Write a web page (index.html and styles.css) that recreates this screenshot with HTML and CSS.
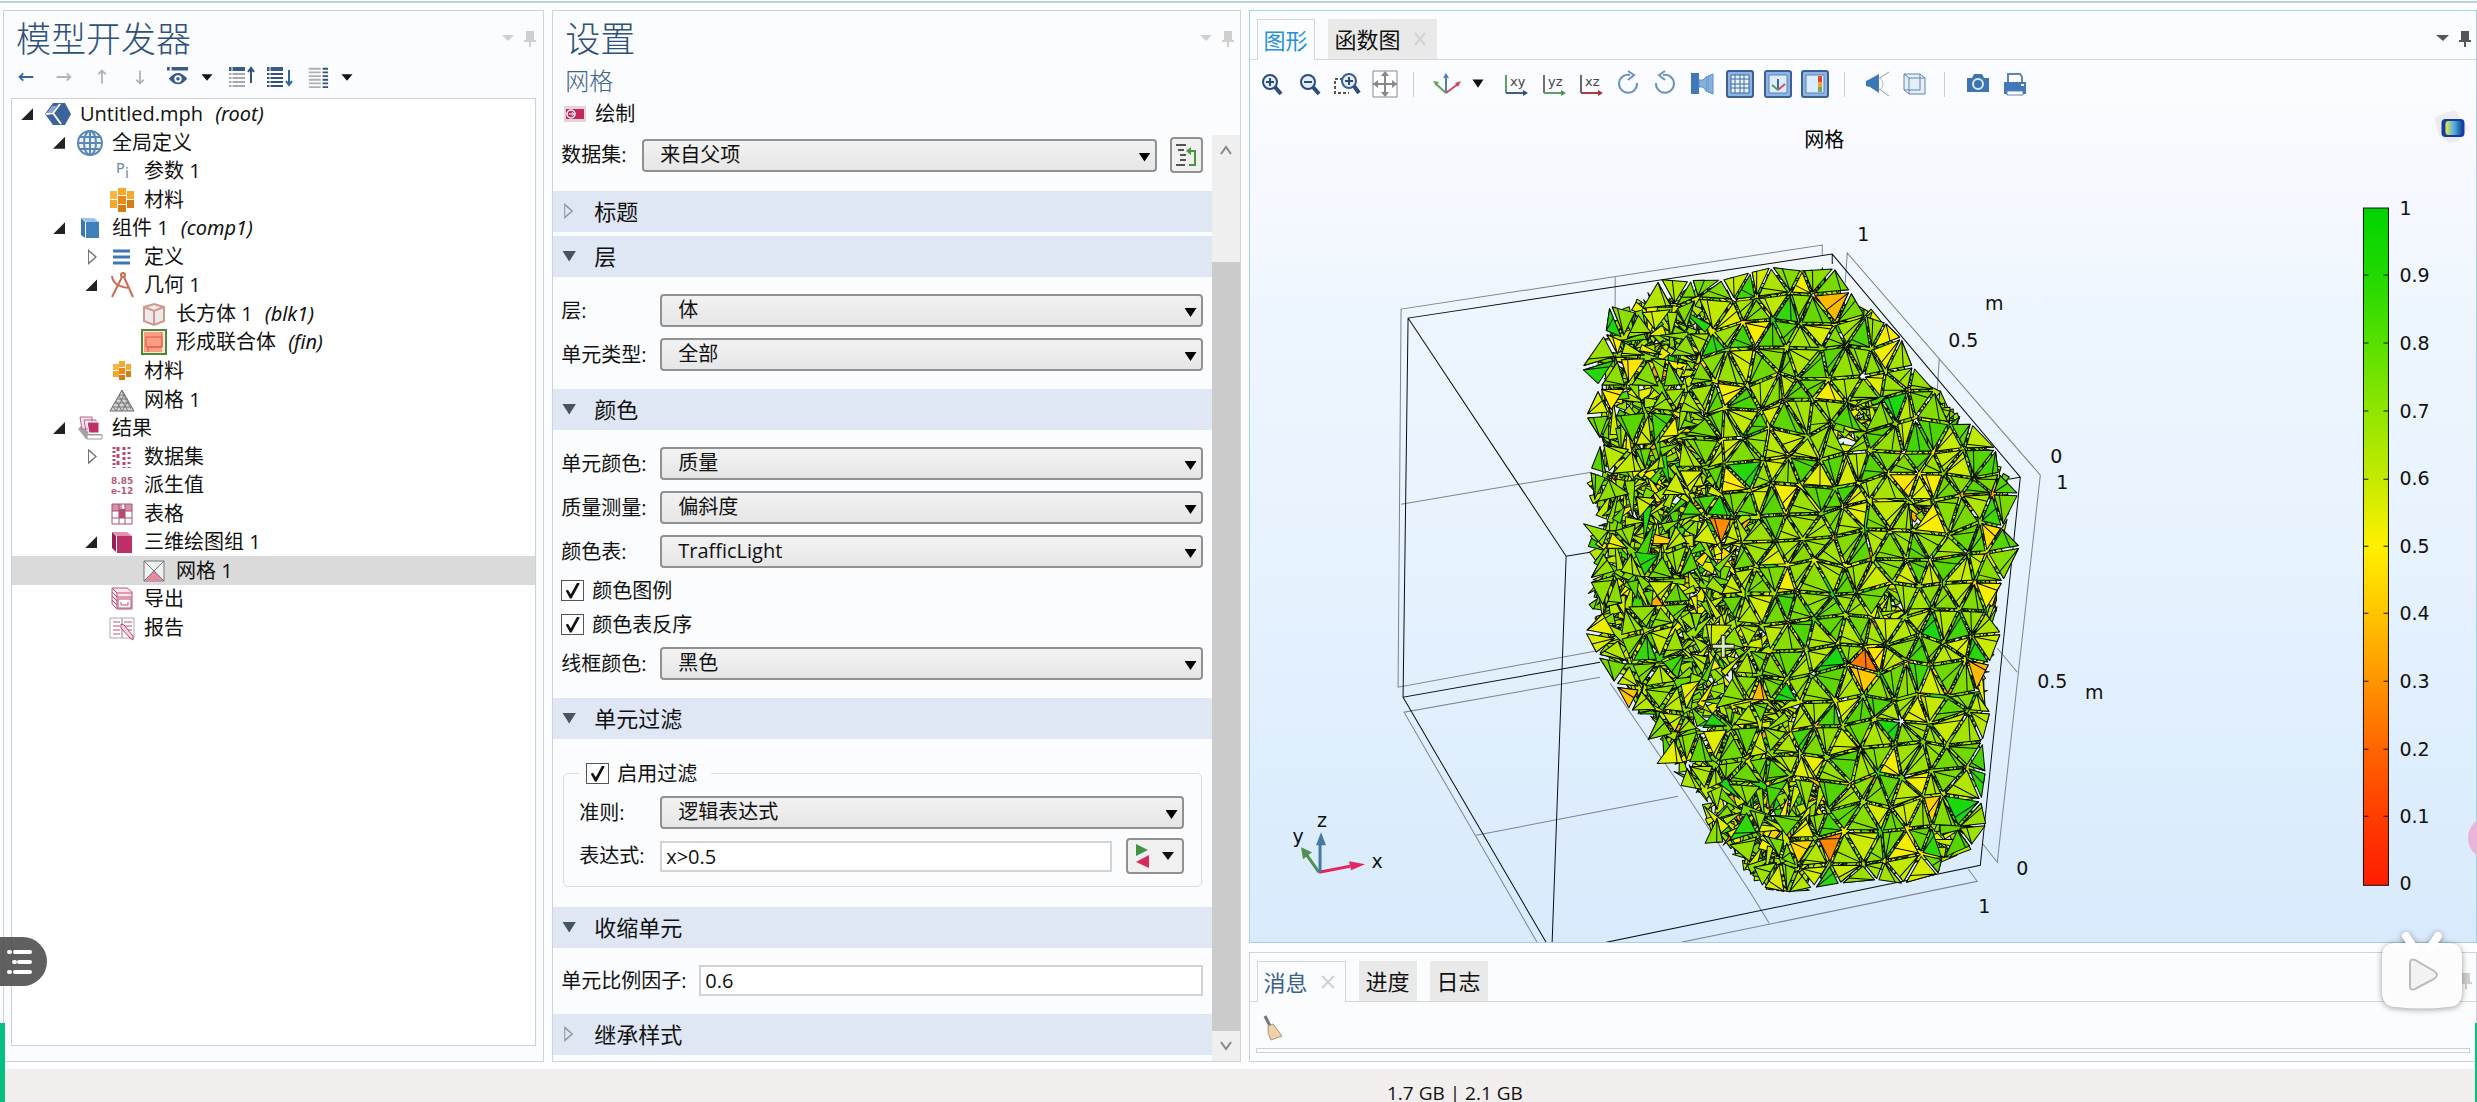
FILE: index.html
```html
<!DOCTYPE html>
<html lang="zh-CN">
<head>
<meta charset="utf-8">
<title>Untitled.mph</title>
<link rel="stylesheet" href="styles.css">
</head>
<body>
<main class="workspace">

<section class="panel builder">
  <header class="panel-head">
    <h1 class="panel-title">模型开发器</h1>
    <span class="head-tools faded"><svg width="34" height="18" viewBox="0 0 34 18"><path d="M0 5h12l-6 6z"/><path d="M24 1h8v9h2v2h-5v5h-2v-5h-5v-2h2z"/></svg></span>
  </header>
  <div class="toolbar builder-tools">
    <button aria-label="后退"><svg viewBox="0 0 24 24"><path d="M20 12H5M9 8l-4 4 4 4" stroke="#34649c" stroke-width="2" fill="none"/></svg></button>
    <button aria-label="前进"><svg viewBox="0 0 24 24"><path d="M4 12h15M15 8l4 4-4 4" stroke="#b4b4b4" stroke-width="2" fill="none"/></svg></button>
    <button aria-label="上移"><svg viewBox="0 0 24 24"><path d="M12 19V5M8 9l4-4 4 4" stroke="#b4b4b4" stroke-width="2" fill="none"/></svg></button>
    <button aria-label="下移"><svg viewBox="0 0 24 24"><path d="M12 5v14M8 15l4 4 4-4" stroke="#b4b4b4" stroke-width="2" fill="none"/></svg></button>
    <button aria-label="显示"><svg viewBox="0 0 24 24"><path d="M0 1h3v4H0zM5 1h18v4H5z" fill="#3a5a8a"/><path d="M2 14q10-13 20 0-10 12-20 0z" fill="#3a5a8a"/><circle cx="12" cy="14" r="4" fill="#fff"/><circle cx="12" cy="14" r="2" fill="#3a5a8a"/></svg></button>
    <button class="narrow" aria-label="显示选项"><svg viewBox="0 0 24 24"><path d="M6 9h12l-6 7z" fill="#111"/></svg></button>
    <button aria-label="全部折叠"><svg class="wide" viewBox="0 0 26 24"><path d="M0 2h16v4H0z" fill="#3a5a8a"/><path d="M0 9h16M0 13h16M0 17h16M0 21h16" stroke="#a8a8a8" stroke-width="2"/><path d="M3 2v20" stroke="#fafcff" stroke-width="1"/><path d="M22 18V3M19 7l3-4 3 4" stroke="#34507c" stroke-width="2" fill="none"/></svg></button>
    <button aria-label="全部展开"><svg class="wide" viewBox="0 0 26 24"><path d="M0 2h16v4H0z" fill="#3a5a8a"/><path d="M0 9h16M0 13h16M0 17h16M0 21h16" stroke="#34507c" stroke-width="2"/><path d="M3 2v20" stroke="#fafcff" stroke-width="1"/><path d="M22 5v15M19 16l3 4 3-4" stroke="#34649c" stroke-width="2" fill="none"/></svg></button>
    <button aria-label="列"><svg viewBox="0 0 24 24"><path d="M2 3h13M2 7h13M2 11h13M2 15h13M2 19h13M2 23h13" stroke="#b0b0b0" stroke-width="2"/><path d="M17 3h6M17 7h6M17 11h6M17 15h6M17 19h6M17 23h6" stroke="#34507c" stroke-width="2"/></svg></button>
    <button class="narrow" aria-label="列选项"><svg viewBox="0 0 24 24"><path d="M6 9h12l-6 7z" fill="#111"/></svg></button>
  </div>
  <div class="tree-box">
  <ul class="tree">
    <li class="l0 open"><svg viewBox="0 0 26 26"><path d="M8 2h12l6 11-6 11H8L0 13z" fill="#3c649c"/><path d="M1 13l7-1 7-9M8 12l8 11" stroke="#fff" stroke-width="2" fill="none"/><path d="M2 12l5-7h6l-6 7z" fill="#8aa8d0"/></svg>Untitled.mph <i>(root)</i></li>
    <li class="l1 open"><svg viewBox="0 0 26 26"><g fill="none" stroke="#5a86b8" stroke-width="2"><circle cx="13" cy="13" r="12" fill="#eaf2fa"/><ellipse cx="13" cy="13" rx="6" ry="12"/><path d="M13 1v24M1 13h24M3 7h20M3 19h20"/></g></svg>全局定义</li>
    <li class="l2"><svg viewBox="0 0 26 26"><text x="7" y="15" class="glyph-pi">P</text><text x="16" y="20" class="glyph-pi">i</text></svg>参数 1</li>
    <li class="l2"><svg viewBox="0 0 26 26"><g fill="#f4a92a"><rect x="9" y="1" width="8" height="7"/><rect x="1" y="4" width="7" height="8" fill="#f8b840"/><rect x="18" y="4" width="7" height="8"/><rect x="9" y="9" width="8" height="8" fill="#f08818"/><rect x="1" y="13" width="7" height="8"/><rect x="18" y="13" width="7" height="8" fill="#d87c14"/><rect x="9" y="18" width="8" height="7" fill="#d87c14"/></g></svg>材料</li>
    <li class="l1 open"><svg viewBox="0 0 26 26"><path d="M4 3h13l5 4H9z" fill="#9cc4e8"/><path d="M4 3l4 4v16l-4-3z" fill="#3a78b4"/><path d="M9 7h13v16H9z" fill="#3f7fbe"/></svg>组件 1 <i>(comp1)</i></li>
    <li class="l2 closed"><svg viewBox="0 0 26 26"><path d="M4 7h17M4 13h17M4 19h17" stroke="#3c78b4" stroke-width="3"/></svg>定义</li>
    <li class="l2 open"><svg viewBox="0 0 26 26"><g fill="none" stroke="#cc6a55" stroke-width="2"><circle cx="14" cy="3" r="2"/><path d="M13 5L3 25M15 5l9 20M3 4q1 11 18 12"/></g></svg>几何 1</li>
    <li class="l3"><svg viewBox="0 0 26 26"><path d="M13 3l10 3v14l-10 4-10-4V6z" fill="#eceaea" stroke="#d0988c" stroke-width="2"/><path d="M3 6l10 4 10-4M13 10v14" stroke="#d0988c" stroke-width="2" fill="none"/></svg>长方体 1 <i>(blk1)</i></li>
    <li class="l3"><svg viewBox="0 0 26 26"><rect x="1" y="1" width="24" height="24" fill="#f8e4dc" stroke="#4c8a34" stroke-width="2"/><path d="M3 3h18v20H3z" fill="#f89c84"/><path d="M5 8h16v10H5zM21 3v15H7v5" fill="none" stroke="#e05a40" stroke-width="1"/></svg>形成联合体 <i>(fin)</i></li>
    <li class="l2"><svg viewBox="0 0 26 26"><g fill="#f4a92a"><rect x="10" y="3" width="6" height="6"/><rect x="4" y="6" width="6" height="6" fill="#f8b840"/><rect x="17" y="6" width="5" height="6"/><rect x="10" y="10" width="6" height="6" fill="#f08818"/><rect x="4" y="13" width="6" height="6"/><rect x="17" y="13" width="5" height="6" fill="#d87c14"/><rect x="10" y="17" width="6" height="5" fill="#d87c14"/></g></svg>材料</li>
    <li class="l2"><svg viewBox="0 0 26 26"><path d="M13 3l12 21H1z" fill="#d4d4d4" stroke="#666" stroke-width="1"/><path d="M10 8h6M8 12h10M6 16h14M4 20h18M7 14l6 10M13 4l9 18M13 24l6-10M4 20l3 4 8-16M10 9l9 15" stroke="#777" stroke-width="1" fill="none"/></svg>网格 1</li>
    <li class="l1 open"><svg viewBox="0 0 26 26"><path d="M1 14l8 10h16v-5H12L4 11z" fill="#a4a4a4"/><path d="M3 2h12v12H5zM7 5h12v12H9z" fill="#f4e4ec" stroke="#b8628a"/><path d="M10 7h12v11H12z" fill="#c03068" stroke="#fff"/><path d="M10 20h15v4H10z" fill="#fff" stroke="#999"/></svg>结果</li>
    <li class="l2 closed"><svg viewBox="0 0 26 26"><path d="M5 3v21" stroke="#b84870" stroke-width="3" stroke-dasharray="2 2"/><path d="M9 3v21" stroke="#b84870" stroke-width="3" stroke-dasharray="4 3"/><path d="M15 3v21" stroke="#b84870" stroke-width="3" stroke-dasharray="3 2"/><path d="M20 3v21" stroke="#b84870" stroke-width="3" stroke-dasharray="2 3"/></svg>数据集</li>
    <li class="l2"><svg viewBox="0 0 26 26"><text x="2" y="12" class="glyph-num">8.85</text><text x="2" y="22" class="glyph-num">e-12</text></svg>派生值</li>
    <li class="l2"><svg viewBox="0 0 26 26"><path d="M3 3h20v20H3z" fill="#fff"/><path d="M3 3h10v7H3zM10 10h6v7h-6zM16 3h7v7h-7z" fill="#d890a8"/><path d="M10 8h6v9h-6z" fill="#b84870"/><path d="M3 3h20v20H3zM10 3v20M16 3v20M3 10h20M3 17h20" fill="none" stroke="#a85070" stroke-width="1"/></svg>表格</li>
    <li class="l2 open"><svg viewBox="0 0 26 26"><path d="M3 3h15l5 4H8z" fill="#e090b0"/><path d="M3 3l4 4v16l-4-4z" fill="#982050"/><path d="M8 7h15v17H8z" fill="#bc2f68"/></svg>三维绘图组 1</li>
    <li class="l3 selected"><svg viewBox="0 0 26 26"><path d="M3 3h20v20H3z" fill="#eef2f2" stroke="#777"/><path d="M3 23L13 12l10 11z" fill="#e08ca0"/><path d="M3 3l20 20M23 3L3 23" stroke="#777" fill="none"/></svg>网格 1</li>
    <li class="l2"><svg viewBox="0 0 26 26"><g fill="#fae8ee" stroke="#c05078" stroke-width="1"><path d="M3 2h15l5 4v17H8l-5-5z"/><path d="M3 2l5 5h15M8 7v16M3 6l5 5h15M3 10l5 5M3 14l5 5" fill="none"/><path d="M9 13h13v9H9z" fill="#fff"/><path d="M12 16v3h7v-3" fill="none"/></g></svg>导出</li>
    <li class="l2"><svg viewBox="0 0 26 26"><path d="M1 3h12v20H1zM13 3h12v20H13z" fill="#fff" stroke="#aaa"/><path d="M4 7h7M4 11h7M4 15h7M4 19h7M15 7h8M15 11h8M18 15h5" stroke="#c05078" stroke-width="1"/><path d="M12 9l3 1 9 11v4l-3-2-9-10z" fill="#f4d0dc" stroke="#b84870"/></svg>报告</li>
  </ul>
  </div>
</section>

<section class="panel settings">
  <header class="panel-head">
    <h1 class="panel-title">设置</h1>
    <span class="head-tools faded"><svg width="34" height="18" viewBox="0 0 34 18"><path d="M1 5h12l-6 6z"/><path d="M25 1h8v9h2v2h-5v5h-2v-5h-5v-2h2z"/></svg></span>
  </header>
  <p class="subtitle">网格</p>
  <button class="plot-btn"><svg width="22" height="18" viewBox="0 0 22 18"><path d="M0 1h22v16H0z" fill="#e4d4da"/><path d="M2 4h18v10H2z" fill="#c02a5c"/><circle cx="7" cy="9" r="4" fill="#c02a5c" stroke="#fff" stroke-width="1.5"/><path d="M5 9h5M8 7l2 2-2 2" stroke="#fff" fill="none"/></svg>绘制</button>
  <div class="scroller">
    <form class="form">
      <div class="row dataset">
        <label for="dataset">数据集:</label>
        <span class="select"><select id="dataset"><option>来自父项</option></select></span>
        <button type="button" class="box-btn" aria-label="转到源"><svg width="24" height="26" viewBox="0 0 24 26"><path d="M2 3h10M4 8h6M6 13h6M6 18h6M2 23h9" stroke="#555" stroke-width="2"/><path d="M14 9h7v14h-6" stroke="#4c9440" stroke-width="2" fill="none"/><path d="M12 9l5-4v8z" fill="#4c9440"/></svg></button>
      </div>
      <h2 class="section shut">标题</h2>
      <h2 class="section">层</h2>
      <div class="fields">
        <div class="row"><label for="level">层:</label><span class="select"><select id="level"><option>体</option></select></span></div>
        <div class="row"><label for="etype">单元类型:</label><span class="select"><select id="etype"><option>全部</option></select></span></div>
      </div>
      <h2 class="section">颜色</h2>
      <div class="fields">
        <div class="row"><label for="ecolor">单元颜色:</label><span class="select"><select id="ecolor"><option>质量</option></select></span></div>
        <div class="row"><label for="quality">质量测量:</label><span class="select"><select id="quality"><option>偏斜度</option></select></span></div>
        <div class="row"><label for="ctable">颜色表:</label><span class="select"><select id="ctable"><option>TrafficLight</option></select></span></div>
        <label class="check"><input type="checkbox" checked>颜色图例</label>
        <label class="check"><input type="checkbox" checked>颜色表反序</label>
        <div class="row"><label for="wire">线框颜色:</label><span class="select"><select id="wire"><option>黑色</option></select></span></div>
      </div>
      <h2 class="section">单元过滤</h2>
      <fieldset class="filter">
        <legend><label class="check"><input type="checkbox" checked>启用过滤</label></legend>
        <div class="row"><label for="crit">准则:</label><span class="select"><select id="crit"><option>逻辑表达式</option></select></span></div>
        <div class="row expr"><label for="expr">表达式:</label><input id="expr" type="text" value="x&gt;0.5">
          <button type="button" class="box-btn" aria-label="插入表达式"><svg width="44" height="26" viewBox="0 0 44 26"><path d="M3 1l12 6-12 6z" fill="#3f9448"/><path d="M16 12v13L3 19z" fill="#dc2858"/><path d="M29 9h12l-6 8z" fill="#111"/></svg></button></div>
      </fieldset>
      <h2 class="section">收缩单元</h2>
      <div class="fields">
        <div class="row scale"><label for="scale">单元比例因子:</label><input id="scale" type="text" value="0.6"></div>
      </div>
      <h2 class="section shut">继承样式</h2>
    </form>
    <div class="scrollbar"><span class="chev"><svg width="14" height="10" viewBox="0 0 14 10"><path d="M2 9l5-7 5 7" stroke="#888" stroke-width="2" fill="none"/></svg></span><span class="thumb"></span><span class="chev"><svg width="14" height="10" viewBox="0 0 14 10"><path d="M2 1l5 7 5-7" stroke="#888" stroke-width="2" fill="none"/></svg></span></div>
  </div>
</section>

<div class="right">
<section class="panel graphics">
  <div class="tabs">
    <button class="tab active blue">图形</button>
    <button class="tab">函数图<svg class="close" width="12" height="14" viewBox="0 0 12 14"><path d="M1 1l10 12M11 1L1 13"/></svg></button>
    <span class="head-tools dark"><svg width="34" height="18" viewBox="0 0 34 18"><path d="M-1 5h13l-6 6z"/><path d="M24 1h8v9h2v2h-5v5h-2v-5h-5v-2h2z"/></svg></span>
  </div>
  <div class="toolbar view-tools">
    <button aria-label="放大"><svg viewBox="0 0 28 28"><circle cx="12" cy="12" r="7" fill="#e4eef8" stroke="#2c4c80" stroke-width="2"/><path d="M17 17l6 7" stroke="#2c4c80" stroke-width="4"/><path d="M8 12h8M12 8v8" stroke="#2c4c80" stroke-width="2"/></svg></button>
    <button aria-label="缩小"><svg viewBox="0 0 28 28"><circle cx="12" cy="12" r="7" fill="#e4eef8" stroke="#2c4c80" stroke-width="2"/><path d="M17 17l6 7" stroke="#2c4c80" stroke-width="4"/><path d="M8 12h8" stroke="#2c4c80" stroke-width="2"/></svg></button>
    <button aria-label="框选缩放"><svg viewBox="0 0 28 28"><path d="M10 9H2v14h14" stroke="#555" stroke-width="2" stroke-dasharray="3 2" fill="none"/><circle cx="16" cy="11" r="7" fill="#e4eef8" stroke="#3c5c90" stroke-width="2"/><path d="M21 16l5 7" stroke="#2c4c80" stroke-width="4"/><path d="M12 11h8M16 7v8" stroke="#2c4c80" stroke-width="2"/></svg></button>
    <button aria-label="缩放到窗口"><svg viewBox="0 0 28 28"><path d="M2 1h24v26H2z" fill="#fff" stroke="#888" stroke-width="1"/><path d="M14 2v24M2 14h24" stroke="#888" stroke-width="2"/><path d="M14 1l4 5h-8zM14 27l4-5h-8zM2 14l5-4v8zM26 14l-5-4v8z" fill="#888"/></svg></button>
    <i class="sep"></i>
    <button aria-label="视图"><svg viewBox="0 0 28 28"><path d="M13 22V5" stroke="#5080b0" stroke-width="2"/><path d="M13 3l3 5h-6z" fill="#5080b0"/><path d="M13 23L3 14" stroke="#60a050" stroke-width="2"/><path d="M0 11l6 1-3 4z" fill="#60a050"/><path d="M13 23l12-9" stroke="#d04860" stroke-width="2"/><path d="M28 11l-3 6-3-4z" fill="#d04860"/></svg></button>
    <button class="narrow" aria-label="视图选项"><svg viewBox="0 0 24 24"><path d="M6 7h12l-6 9z" fill="#111"/></svg></button>
    <button aria-label="xy 视图"><svg viewBox="0 0 28 28"><path d="M5 5v18" stroke="#60a060" stroke-width="2"/><path d="M5 23h20" stroke="#406080" stroke-width="2"/><path d="M27 23l-5-3v6z" fill="#305078"/><text x="9" y="16" class="glyph-ax">xy</text></svg></button>
    <button aria-label="yz 视图"><svg viewBox="0 0 28 28"><path d="M5 5v18" stroke="#707070" stroke-width="2"/><path d="M5 23h20" stroke="#60a060" stroke-width="2"/><path d="M27 23l-5-3v6z" fill="#509050"/><text x="9" y="16" class="glyph-ax">yz</text></svg></button>
    <button aria-label="xz 视图"><svg viewBox="0 0 28 28"><path d="M5 5v18" stroke="#606870" stroke-width="2"/><path d="M5 23h20" stroke="#a04040" stroke-width="2"/><path d="M27 23l-5-3v6z" fill="#b03030"/><text x="9" y="16" class="glyph-ax">xz</text></svg></button>
    <button aria-label="顺时针"><svg viewBox="0 0 28 28"><path d="M16 5a9 9 0 1 0 7 8" stroke="#6c94bc" stroke-width="2" fill="none"/><path d="M14 1l6 4-6 5" stroke="#6c94bc" stroke-width="2" fill="none"/></svg></button>
    <button aria-label="逆时针"><svg viewBox="0 0 28 28"><path d="M12 5a9 9 0 1 1-7 8" stroke="#6c94bc" stroke-width="2" fill="none"/><path d="M14 1L8 5l6 5" stroke="#6c94bc" stroke-width="2" fill="none"/></svg></button>
    <button aria-label="镜像"><svg viewBox="0 0 28 28"><path d="M2 3h8v21H2z" fill="#4078b8"/><path d="M10 10h4l4-4v16l-4-5h-4zM19 6l5-2v20l-5-2z" fill="#88b0dc" stroke="#5c8cc4"/></svg></button>
    <button class="on" aria-label="网格线"><svg viewBox="0 0 28 28"><path d="M5 5h18v18H5z" fill="#e8f2fc"/><path d="M5 5h18v18H5zM9 5v18M14 5v18M18 5v18M5 9h18M5 14h18M5 18h18" stroke="#3c68a0" fill="none"/></svg></button>
    <button class="on" aria-label="坐标轴"><svg viewBox="0 0 28 28"><path d="M5 5h18v18H5z" fill="#dcecfc" stroke="#5c84b4"/><path d="M14 20V9" stroke="#3c68a0" stroke-width="2"/><path d="M14 20l-6-5" stroke="#50a050" stroke-width="2"/><path d="M14 20l7-6" stroke="#d05060" stroke-width="2"/></svg></button>
    <button class="on" aria-label="图例"><svg viewBox="0 0 28 28"><path d="M5 5h18v18H5z" fill="#dcecfc" stroke="#5c84b4"/><path d="M17 6h4v6h-4z" fill="#e04828"/><path d="M17 12h4v5h-4z" fill="#f0a030"/><path d="M17 17h4v5h-4z" fill="#70a860"/></svg></button>
    <i class="sep"></i>
    <button aria-label="场景光"><svg viewBox="0 0 28 28"><path d="M2 11l4-2 9-5v19l-9-6-4-1z" fill="#3c78b8"/><path d="M14 9l11-7M14 18l11 8" stroke="#999" stroke-width="1"/><path d="M16 8q6 6 0 12" fill="none" stroke="#bbb"/></svg></button>
    <button aria-label="透明"><svg viewBox="0 0 28 28"><path d="M3 4h16v16H3zM8 8h16v16H8z" fill="#dce8f4" fill-opacity=".7" stroke="#5c84b4" stroke-width="1"/><path d="M3 4l5 4M19 4l5 4M3 20l5 4" stroke="#5c84b4"/></svg></button>
    <i class="sep"></i>
    <button aria-label="快照"><svg viewBox="0 0 28 28"><path d="M3 8h5l2-4h8l2 4h5v14H3z" fill="#3c74b4"/><circle cx="14" cy="14" r="5" fill="#3c74b4" stroke="#dce8f4" stroke-width="2"/></svg></button>
    <button aria-label="打印"><svg viewBox="0 0 28 28"><path d="M7 12V4h12l2 3v5" fill="#fff" stroke="#5c84b4" stroke-width="2"/><path d="M3 12h22v12H3z" fill="#4078b8"/><path d="M6 21h16v4H6z" fill="#fff" stroke="#5c84b4"/><path d="M20 14h3v2h-3z" fill="#fff"/></svg></button>
  </div>
  <svg class="plot" viewBox="1250 108 1226 834" role="img" aria-label="网格">
    <defs>
      <linearGradient id="traffic" x1="0" y1="0" x2="0" y2="1"><stop offset="0" stop-color="#00d400"/><stop offset=".1" stop-color="#20da00"/><stop offset=".2" stop-color="#58e000"/><stop offset=".3" stop-color="#90e600"/><stop offset=".4" stop-color="#c4ea00"/><stop offset=".5" stop-color="#fff000"/><stop offset=".6" stop-color="#ffc400"/><stop offset=".7" stop-color="#ff9400"/><stop offset=".8" stop-color="#ff6400"/><stop offset=".9" stop-color="#ff3c00"/><stop offset="1" stop-color="#ff1c00"/></linearGradient>
      <linearGradient id="badge" x1="0" x2="1"><stop offset="0" stop-color="#f0e850"/><stop offset=".5" stop-color="#50b0e0"/><stop offset="1" stop-color="#1440a0"/></linearGradient>
    </defs>
    <text class="plot-title" x="1824" y="147">网格</text>
    <path d="M2434 117l20-7 14 18-10 13-10 2-10-8z" fill="#ececf0"/><rect x="2441" y="119" width="23" height="18" rx="4" fill="#183c98"/><rect x="2445" y="121" width="17" height="14" rx="3" fill="url(#badge)"/>
    <g class="frame-far">
      <path d="M1822 255V245L1401 309 1398 687 1600 650M1615 277v30M1401 504L1591 472"/>
      <path d="M1845 283L1847 253 2040 475 1997 862 1982 843M1939 358l-2 32M1997 648l20 24"/>
      <path d="M1600 677L1404 712 1537 942M1476 835L1678 796M1610 683L1688 797 1750 892 1769 923M1681 942L1977 881 1968 869"/>
    </g>
    <path class="frame-near" d="M1600 662L1403 697 1408 318 1832 254 2020 477 1980 865 1606 942M1832 254v10M2020 477l-12 2M1408 318L1566 556 1590 552M1566 556L1552 942M1403 697L1546 942"/>
    <g id="mesh"></g>
    <path class="cursor" d="M1721 635v9h-9v4h9v9h4v-9h9v-4h-9v-9z"/>
    <g class="axis-text">
      <text x="1863" y="241">1</text><text x="1994" y="310">m</text><text x="1963" y="347">0.5</text><text x="2056" y="463">0</text><text x="2062" y="489">1</text><text x="2052" y="688">0.5</text><text x="2094" y="699">m</text><text x="2022" y="875">0</text><text x="1984" y="913">1</text>
      <text x="1322" y="827">z</text><text x="1298" y="843">y</text><text x="1377" y="868">x</text>
    </g>
    <path d="M1319 872L1350 866" stroke="#e02860" stroke-width="3"/><path d="M1365 864l-16-3 2 9z" fill="#e02860"/>
    <path d="M1319 872L1307 855" stroke="#509050" stroke-width="3"/><path d="M1301 847l2 12 9-7z" fill="#509050"/>
    <path d="M1320 872V844" stroke="#4878a4" stroke-width="3"/><path d="M1321 832l5 13h-10z" fill="#4878a4"/>
    <rect x="2363" y="208" width="25" height="677" fill="url(#traffic)" stroke="#111" stroke-width="1"/>
    <path class="ticks" d="M2363 275h5M2383 275h5M2363 343h5M2383 343h5M2363 411h5M2383 411h5M2363 479h5M2383 479h5M2363 546h5M2383 546h5M2363 613h5M2383 613h5M2363 681h5M2383 681h5M2363 749h5M2383 749h5M2363 816h5M2383 816h5"/>
    <g class="legend-text">
      <text x="2399" y="215">1</text><text x="2399" y="282">0.9</text><text x="2399" y="350">0.8</text><text x="2399" y="418">0.7</text><text x="2399" y="485">0.6</text><text x="2399" y="553">0.5</text><text x="2399" y="620">0.4</text><text x="2399" y="688">0.3</text><text x="2399" y="756">0.2</text><text x="2399" y="823">0.1</text><text x="2399" y="890">0</text>
    </g>
  </svg>
</section>

<section class="panel messages">
  <div class="tabs">
    <button class="tab active navy">消息<svg class="close" width="14" height="14" viewBox="0 0 14 14"><path d="M1 1l12 12M13 1L1 13"/></svg></button>
    <button class="tab">进度</button>
    <button class="tab">日志</button>
    <span class="head-tools faded"><svg width="34" height="18" viewBox="0 0 34 18"><path d="M0 5h13l-6 6z"/><path d="M25 1h8v9h2v2h-5v5h-2v-5h-5v-2h2z"/></svg></span>
  </div>
  <button class="clear" aria-label="清除"><svg width="20" height="26" viewBox="0 0 20 26"><path d="M2 1l5 10" stroke="#777" stroke-width="3"/><path d="M5 11l5-2 9 12-11 4q-4-6-3-14z" fill="#f4cfa4" stroke="#998" stroke-width="1"/></svg></button>
  <div class="log"></div>
</section>
</div>
</main>

<footer class="status">1.7 GB | 2.1 GB</footer>

<button class="drawer" aria-label="目录"><svg width="26" height="24" viewBox="0 0 26 24"><path d="M8 2h15M12 12h11M8 22h15M2 2h1M7 12h1M2 22h1" stroke="#fff" stroke-width="4" stroke-linecap="round"/></svg></button>
<span class="edge edge-left"></span><span class="edge edge-right"></span><span class="bubble"></span>
<button class="player" aria-label="播放"><svg width="100" height="100" viewBox="0 0 100 100"><path d="M34 16l8 12M66 16l-8 12" stroke="#fff" stroke-width="8" stroke-linecap="round"/><path d="M24 23h52q14 0 14 14v34q0 16-14 16-26 3-52 0-14 0-14-16V37q0-14 14-14z" fill="#fff" fill-opacity=".97"/><path d="M38 43q0-5 5-3l19 11q6 4 0 8L43 69q-5 2-5-3z" fill="#f2f2f2" stroke="#bbb" stroke-width="2"/></svg></button>
<script src="mesh.js"></script>
</body>
</html>
```
FILE: styles.css
```css
*, ::before, ::after { box-sizing: border-box; }
body {
  margin: 0; min-height: 100vh; display: flex; flex-direction: column; position: relative;
  overflow-x: hidden; background: #fbfdff; color: #111;
  font: 20px/28px "Open Sans", "Noto Sans CJK SC", sans-serif;
}
button, select, input { font: inherit; color: inherit; margin: 0; }
button { background: none; border: 0; padding: 0; }
h1, h2, p, ul { margin: 0; padding: 0; font-weight: 400; }
.workspace {
  flex: 1; display: grid; grid-template-columns: 541fr 688fr 1228fr; gap: 8px;
  margin: 1px 0 0; padding: 7px 0 7px 3px; border-top: 2px solid #bcd0da;
}
.panel { border: 1px solid #cdd3d8; background: #fbfcfe; min-width: 0; }
.panel-head { display: flex; justify-content: space-between; padding: 7px 7px 0 12px; }
.panel-title { font-size: 35px; line-height: 42px; font-weight: 300; color: #2f5078; }
.head-tools { padding-top: 12px; }
.head-tools svg { display: block; overflow: visible; }
.faded { fill: #cfcfcf; }
.dark { fill: #555; }
.toolbar { display: flex; align-items: center; }
.toolbar button { display: flex; align-items: center; justify-content: center; }

.builder { display: flex; flex-direction: column; }
.builder-tools { height: 38px; padding: 0 3px 4px; }
.builder-tools button { width: 38px; }
.builder-tools .narrow { width: 20px; }
.builder-tools .narrow + button { margin-left: 6px; }
.builder-tools svg { flex: none; width: 22px; height: 22px; }
.builder-tools .wide { width: 26px; height: 24px; }
.tree-box { flex: 1; margin: 0 7px 15px; padding-top: 1px; border: 1px solid #cdd1d4; background: #fff; }
.tree { list-style: none; height: 542px; display: grid; grid-auto-rows: 1fr; }
.tree li { display: flex; align-items: center; white-space: pre; }
.tree svg { width: 26px; height: 26px; flex: none; margin-right: 9px; }
.tree i { font-family: "Noto Sans", sans-serif; padding-left: 7px; }
.tree li::before { content: ""; width: 12px; margin-right: 12px; flex: none; }
.tree .open::before { height: 12px; background: #222; clip-path: polygon(100% 0, 100% 100%, 0 100%); }
.tree .closed::before { width: 9px; height: 16px; margin: 0 12px 0 3px; background: #777; clip-path: polygon(0 0, 100% 50%, 0 100%, 0 0, 1px 3px, 1px 13px, 7px 50%, 1px 3px); }
.l0 { padding-left: 9px; }
.l1 { padding-left: 41px; }
.l2 { padding-left: 73px; }
.l3 { padding-left: 105px; }
.selected { background: #dadadb; }
.glyph-pi { font: 14px "DejaVu Sans", sans-serif; fill: #6c8cac; }
.glyph-num { font: bold 9px "DejaVu Sans", sans-serif; fill: #b85878; }
.glyph-ax { font: 13px "DejaVu Sans", sans-serif; fill: #444; }

.settings { display: flex; flex-direction: column; }
.subtitle { padding: 4px 12px 0; font-size: 24px; line-height: 34px; font-weight: 300; color: #3f648c; }
.plot-btn { display: flex; align-items: center; gap: 9px; padding-left: 11px; align-self: flex-start; height: 28px; margin: 2px 0 7px; }
.scroller { flex: 1; display: flex; }
.form { flex: 1; min-width: 0; }
.row { display: grid; grid-template-columns: 99px 1fr; align-items: center; }
.row label, .check { white-space: nowrap; }
.dataset { grid-template-columns: 81px 1fr 33px; padding: 2px 9px 18px 8px; }
.dataset .select { margin-right: 13px; }
.select { position: relative; display: block; }
.select::after {
  content: ""; position: absolute; right: 6px; top: 14px; pointer-events: none;
  width: 12px; height: 9px; background: #000; clip-path: polygon(0 0, 100% 0, 50% 100%);
}
select {
  appearance: none; display: block; width: 100%; height: 33px; padding: 0 16px 3px; border: 2px solid #919191;
  border-radius: 4px; background: linear-gradient(#f2f2f3, #e6e6e7);
}
.box-btn {
  display: flex; align-items: center; justify-content: center; height: 36px; border: 2px solid #919191;
  border-radius: 4px; background: #f0f0f0;
}
.section { display: flex; align-items: center; height: 41px; padding: 0 0 1px 9px; background: #dfe7f4; font-size: 22px; }
.section::before { content: ""; width: 14px; height: 11px; margin-right: 18px; background: #465364; clip-path: polygon(0 0, 100% 0, 50% 100%); }
.shut::before { width: 9px; height: 16px; margin: 0 21px 0 2px; background: #8c949c; clip-path: polygon(0 0, 100% 50%, 0 100%, 0 0, 1px 3px, 1px 13px, 7px 50%, 1px 3px); }
.shut + .section { margin-top: 4px; }
.fields { display: flex; flex-direction: column; gap: 11px; padding: 17px 9px 18px 8px; }
.check { display: flex; align-items: center; gap: 8px; height: 23px; }
input[type=checkbox] { appearance: none; width: 23px; height: 21px; border: 1px solid #555; background: #fff; display: grid; place-items: center; }
input[type=checkbox]:checked::before { content: ""; width: 14px; height: 16px; background: #111; clip-path: polygon(0 52%, 16% 46%, 36% 74%, 82% 0, 100% 6%, 42% 100%, 30% 100%); }
input[type=text] { width: 100%; min-width: 0; height: 31px; padding: 0 4px; border: 2px solid #d3d3d3; background: #fff; }
.filter { margin: 23px 10px 20px; padding: 11px 17px 12px 15px; border: 1px solid #d8dce0; border-radius: 5px; min-width: 0; }
.filter legend { padding: 0 14px 0 7px; }
.filter .row { grid-template-columns: 81px 1fr; }
.filter .expr { grid-template-columns: 81px 1fr 58px; padding-top: 9px; }
.expr input[type=text] { width: calc(100% - 14px); }
.scale { grid-template-columns: 138px 1fr; }
.scrollbar { width: 28px; display: flex; flex-direction: column; background: #efefef; padding-bottom: 1px; }
.chev { height: 29px; display: grid; place-items: center; }
.thumb { flex: 1; margin-top: 98px; background: #cbcbcb; }

.right { display: flex; flex-direction: column; gap: 9px; min-width: 0; }
.graphics { flex: 1; display: flex; flex-direction: column; border-color: #a9cfe0; background: linear-gradient(#fbfcff, #fbfcff 60px, #f7f9ff 160px, #eef6fd 300px, #e6f2fe 560px, #d8eafc); }
.tabs { display: flex; align-items: flex-end; height: 49px; padding: 0 5px 0 7px; border-bottom: 1px solid #d4d6d8; }
.tabs .head-tools { margin-left: auto; align-self: center; padding-top: 8px; }
.tab { display: flex; align-items: center; gap: 13px; height: 40px; padding: 0 7px; margin-right: 13px; background: #e9e9e9; font-size: 22px; line-height: 34px; }
.tab .close { stroke: #d2d2d2; stroke-width: 2; margin-right: 4px; }
.tab.active { height: 41px; margin-bottom: -1px; padding: 0 6px; border: 1px solid #d4d6d8; border-bottom: 0; background: #fbfcfe; }
.blue { color: #2a90d4; }
.navy { color: #3a608c; }
.view-tools { height: 48px; padding-left: 3px; }
.view-tools button { flex: none; width: 28px; height: 28px; margin: 0 5px; }
.view-tools button:nth-of-type(even) { margin-right: 4px; }
.view-tools .narrow { width: 24px; margin: 0; }
.view-tools .narrow + button { margin-left: 7px; }
.view-tools svg { width: 28px; height: 28px; flex: none; }
.view-tools .narrow svg { width: 22px; }
.view-tools .on { border: 2px solid #3c5f94; border-radius: 3px; background: #8cb4e4; }
.sep { width: 1px; height: 25px; margin: 0 14px 0 10px; background: #ccc; }
.plot { display: block; flex: 1; width: 100%; min-height: 0; }
.plot-title { font-size: 20px; text-anchor: middle; }
.axis-text, .legend-text { font: 19px "DejaVu Sans", sans-serif; fill: #111; }
.axis-text { text-anchor: middle; }
.frame-far { fill: none; stroke: #7c858e; stroke-width: 1; }
.frame-near { fill: none; stroke: #0a0e14; stroke-width: 1; }
.ticks { stroke: #111; stroke-width: 1; fill: none; }
.cursor { fill: #dcecc0; stroke: #111; stroke-width: 1; }
#mesh { stroke: #040802; stroke-width: 1; stroke-linejoin: round; }

.messages { padding-bottom: 8px; }
.clear { display: block; padding: 13px 13px 8px; height: 46px; }
.clear svg { display: block; }
.log { height: 5px; margin: 0 6px; border: 1px solid #cfd2d4; }
.status { height: 34px; padding: 14px 0 0 1387px; background: #f1eeed; font-size: 19px; line-height: 20px; white-space: nowrap; }

.drawer { position: absolute; left: 0; top: 937px; width: 47px; height: 49px; padding-left: 7px; border-radius: 0 25px 25px 0; background: rgba(72, 72, 72, .87); display: flex; align-items: center; }
.edge { position: absolute; bottom: 0; height: 80px; background: #06c080; }
.edge-left { left: 0; width: 5px; }
.edge-right { right: 0; width: 2px; }
.bubble { position: absolute; right: -31px; top: 817px; width: 40px; height: 42px; border-radius: 50%; background: #e8b4d8; }
.player { position: absolute; right: 5px; top: 920px; filter: drop-shadow(0 1px 3px rgba(0, 0, 0, .4)); }
.player svg { display: block; }
```
FILE: mesh.js
```js
// Draws the shrunken tetrahedral elements, coloured by element quality.
(function () {
  var seed = 20;
  function rnd() {
    seed = (seed + 0x6D2B79F5) | 0;
    var t = Math.imul(seed ^ (seed >>> 15), 1 | seed);
    t = (t + Math.imul(t ^ (t >>> 7), 61 | t)) ^ t;
    return ((t ^ (t >>> 14)) >>> 0) / 4294967296;
  }
  var outline = [[1634,286],[1658,283],[1700,279],[1742,272],[1781,265],[1820,258],[1838,266],[1846,280],[1860,295],
    [1878,306],[1895,330],[1914,361],[1932,372],[1952,396],[1977,422],[1994,442],[2012,462],[2018,477],[2015,530],
    [2009,580],[2003,640],[1995,690],[1990,740],[1984,800],[1981,858],[1950,867],[1920,876],[1898,883],[1865,887],
    [1840,893],[1805,898],[1774,900],[1746,886],[1726,856],[1700,840],[1696,812],[1674,782],[1654,755],[1652,732],
    [1630,720],[1626,696],[1608,683],[1598,665],[1588,640],[1588,626],[1580,608],[1578,598],[1584,575],[1580,540],
    [1592,520],[1580,500],[1578,482],[1586,466],[1594,442],[1582,424],[1596,396],[1586,358],[1588,350],[1602,320],[1618,296]];
  function inside(x, y) {
    var hit = false;
    for (var i = 0, j = outline.length - 1; i < outline.length; j = i++) {
      var a = outline[i], b = outline[j];
      if ((a[1] > y) !== (b[1] > y) && x < (b[0] - a[0]) * (y - a[1]) / (b[1] - a[1]) + a[0]) hit = !hit;
    }
    return hit;
  }
  // True when the point keeps a distance of m from the outline.
  function deepInside(x, y, m) {
    return inside(x - m, y) && inside(x + m, y) && inside(x, y - m) && inside(x, y + m);
  }
  var stops = [[255,120,0],[255,160,0],[255,205,0],[255,236,0],[232,240,0],[196,234,0],[160,226,0],[128,218,0],[84,212,0],[24,216,16]];
  function colour(q) {
    var p = Math.max(0, Math.min(0.999, q)) * (stops.length - 1), i = Math.floor(p), f = p - i;
    return 'rgb(' + stops[i].map(function (c, k) { return Math.round(c + (stops[i + 1][k] - c) * f); }).join() + ')';
  }
  var out = [];
  function tri(p, q) {
    out.push('<path fill="' + colour(q) + '" d="M' + p.map(function (v) { return v[0].toFixed(1) + ' ' + v[1].toFixed(1); }).join('L') + 'z"/>');
  }
  function quality() { return 0.26 + (rnd() + rnd() + rnd()) * 0.3 - (rnd() < 0.04 ? 0.4 : 0); }

  // Deep layer: thin elements seen through the gaps.
  for (var n = 0; n < 7000; n++) {
    var x = 1580 + rnd() * 440, y = 258 + rnd() * 640, a = rnd() * 6.283, len = 8 + rnd() * 10, w = 3 + rnd() * 3;
    var c = Math.cos(a), s = Math.sin(a);
    var sl = [[x + c * len, y + s * len], [x - c * len - s * w, y - s * len + c * w], [x - c * len + s * w, y - s * len - c * w]];
    if (sl.every(function (v) { return deepInside(v[0], v[1], 7); })) tri(sl, quality() - 0.06);
  }

  // Front layer: faces on a jittered triangular lattice.
  var cols = 17, rows = 26, pts = [];
  for (var r = 0; r <= rows; r++) {
    pts.push([]);
    for (var k = 0; k <= cols; k++) {
      pts[r].push([1556 + (k + (r % 2) / 2) * 29 + (rnd() - 0.5) * 13, 240 + r * 27 + (rnd() - 0.5) * 12 - (k - 9) * 2]);
    }
  }
  function face(p, f, skip) {
    var cx = (p[0][0] + p[1][0] + p[2][0]) / 3, cy = (p[0][1] + p[1][1] + p[2][1]) / 3;
    if (!p.every(function (v) { return inside(cx + (v[0] - cx) * 0.45, cy + (v[1] - cy) * 0.45); })) return;
    if (rnd() < skip && deepInside(cx, cy, 24)) return;
    p = p.map(function (v) { return [cx + (v[0] - cx) * f, cy + (v[1] - cy) * f]; });
    var q = quality();
    tri(p, q);
    // A neighbouring facet of the same element, seen edge-on.
    var t = 0.15 + rnd() * 0.3, o = Math.floor(rnd() * 3), A = p[o], B = p[(o + 1) % 3], C = p[(o + 2) % 3];
    tri([A, [A[0] + (B[0] - A[0]) * t, A[1] + (B[1] - A[1]) * t], C], q);
  }
  for (r = 0; r < rows; r++) {
    for (k = 0; k < cols; k++) {
      var A = pts[r][k], B = pts[r][k + 1], C = pts[r + 1][k], D = pts[r + 1][k + 1];
      var side = A[0] < 1690 + Math.max(0, A[1] - 420) * 0.3;
      var f = side ? 0.76 : 0.84, skip = side ? 0.28 : 0.02;
      if (r % 2) { face([A, B, D], f, skip); face([A, D, C], f, skip); }
      else { face([A, B, C], f, skip); face([B, D, C], f, skip); }
    }
  }
  document.getElementById('mesh').innerHTML = out.join('');
})();
```
